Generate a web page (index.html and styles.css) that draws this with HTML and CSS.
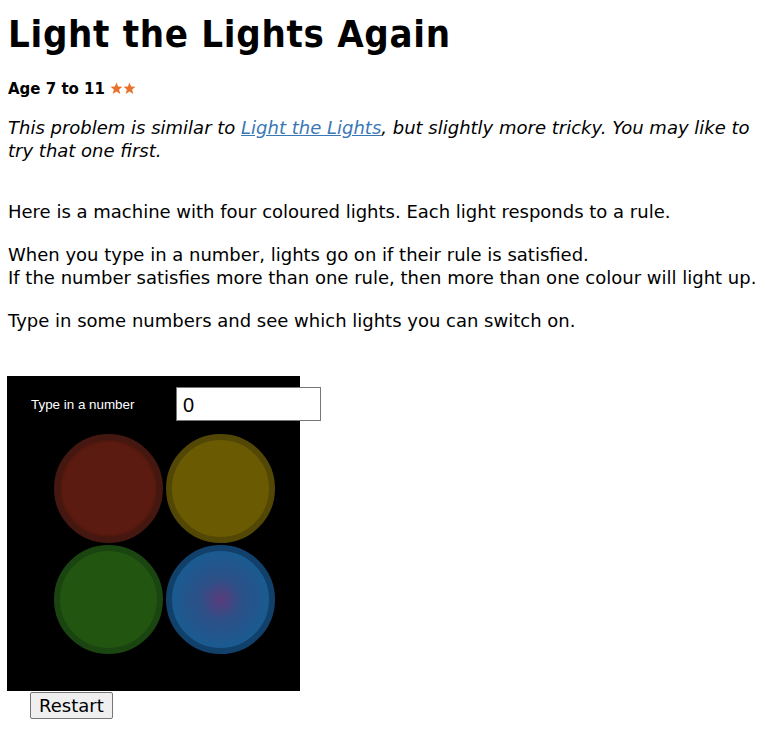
FILE: index.html
```html
<!DOCTYPE html>
<html lang="en">

<head>
    <meta charset="UTF-8">
    <meta name="viewport" content="width=device-width, initial-scale=1.0">
    <title>Light the Lights Again</title>
    <link rel="stylesheet" href="styles.css">
</head>

<body>
    <h1 class="title">Light the Lights Again</h1>
    <p class="age">Age 7 to 11
        <span class="stars">
            <svg width="26" height="13" viewBox="0 0 26 13">
                <path d="M6.5 0.5 L8.1 4.6 L12.5 4.8 L9.1 7.6 L10.3 11.9 L6.5 9.5 L2.7 11.9 L3.9 7.6 L0.5 4.8 L4.9 4.6 Z" />
                <path d="M19.5 0.5 L21.1 4.6 L25.5 4.8 L22.1 7.6 L23.3 11.9 L19.5 9.5 L15.7 11.9 L16.9 7.6 L13.5 4.8 L17.9 4.6 Z" />
            </svg>
        </span>
    </p>

    <p class="intro">This problem is similar to <a href="#">Light the Lights</a>, but slightly more tricky. You may like to try that one first.</p>

    <p>Here is a machine with four coloured lights. Each light responds to a rule.</p>
    <p>When you type in a number, lights go on if their rule is satisfied.<br>If the number satisfies more than one rule, then more than one colour will light up.</p>
    <p>Type in some numbers and see which lights you can switch on.</p>

    <div class="machine">
        <div class="machine-head">
            <label for="number">Type in a number</label>
            <input type="text" id="number" value="0">
        </div>
        <div class="lights">
            <div class="light red"></div>
            <div class="light yellow"></div>
            <div class="light green"></div>
            <div class="light blue"></div>
        </div>
    </div>
    <button class="restart" type="button">Restart</button>
</body>

</html>
```

FILE: styles.css
```css
/* General */
body {
    margin: 0;
    padding: 0 8px;
    font-family: 'DejaVu Sans', sans-serif;
    font-size: 18px;
    line-height: 23px;
    color: #000;
    background: #fff;
}

p {
    margin: 0 0 20px;
}

/* Heading */
.title {
    margin: 12px 0 0;
    font-size: 38px;
    font-stretch: condensed;
    letter-spacing: 0.7px;
    line-height: 44px;
    font-weight: bold;
}

.age {
    margin: 22px 0 15px;
    font-size: 15px;
    font-weight: bold;
}

.stars svg {
    fill: #e8722c;
    vertical-align: -1px;
}

.intro {
    font-style: italic;
    margin-bottom: 38px;
}

.intro a {
    color: #3a78b5;
}

/* Machine */
.machine {
    width: 293px;
    height: 315px;
    margin: 44px 0 0 -1px;
    background: #000;
    box-sizing: border-box;
    padding-top: 11px;
}

.machine-head {
    display: flex;
    align-items: center;
    height: 34px;
    padding-left: 24px;
}

.machine-head label {
    flex-shrink: 0;
    width: 145px;
    color: #fff;
    font-family: 'Liberation Sans', Arial, sans-serif;
    font-size: 13.4px;
}

.machine-head input {
    flex-shrink: 0;
    width: 145px;
    height: 34px;
    box-sizing: border-box;
    border: 1px solid #767676;
    padding: 2px 6px 0;
    font-family: 'Liberation Sans', Arial, sans-serif;
    font-size: 20px;
}

.lights {
    display: grid;
    grid-template-columns: 109px 109px;
    grid-auto-rows: 109px;
    column-gap: 3px;
    row-gap: 2px;
    margin: 13px 0 0 47px;
}

.light {
    border-radius: 50%;
    box-sizing: border-box;
    border: 6px solid;
}

.red {
    background: #5b1b10;
    border-color: #441710;
    box-shadow: inset 0 0 3px #3a120b;
}

.yellow {
    background: #6a5b02;
    border-color: #524705;
}

.green {
    background: #215510;
    border-color: #1a4410;
}

.blue {
    background: radial-gradient(circle, #5b3c7c 0%, #2d5088 30%, #1a5b90 70%);
    border-color: #11406a;
}

/* Restart */
.restart {
    margin: 1px 0 0 22px;
    padding: 2px 8px;
    font-family: 'DejaVu Sans', sans-serif;
    font-size: 18px;
    background: #efefef;
    border: 1px solid #767676;
    border-radius: 2px;
}
```
